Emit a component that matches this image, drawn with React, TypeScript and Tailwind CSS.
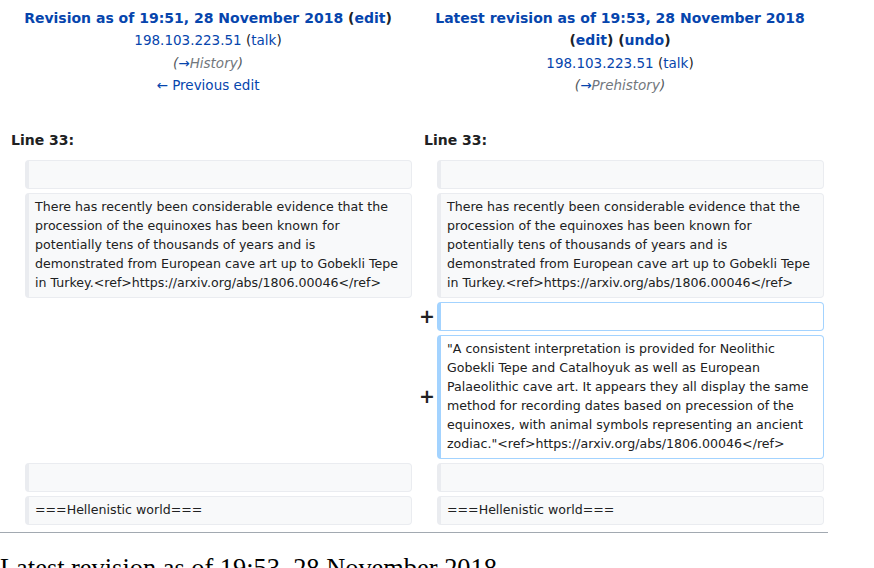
import React from "react";

const sans = { fontFamily: '"DejaVu Sans", sans-serif' };

function Box({ added, children }: { added?: boolean; children?: React.ReactNode }) {
  return (
    <div
      className={
        "rounded-[4px] border border-l-4 border-solid pt-[3px] pb-[5px] pl-[6px] pr-[6px] text-[12.6px] leading-[19px] text-[#202122] " +
        (added ? "border-[#a3d3ff] bg-white" : "border-[#eaecf0] bg-[#f8f9fa]")
      }
    >
      {children ? children : <span>&nbsp;</span>}
    </div>
  );
}

function Marker({ plus }: { plus?: boolean }) {
  return (
    <div className="-mr-[2px] flex items-center justify-end text-[19px] font-bold text-[#202122]">
      {plus ? "+" : ""}
    </div>
  );
}

const text1 = (
  <>
    There has recently been considerable evidence that the procession of the equinoxes has been known for
    potentially tens of thousands of years and is demonstrated from European cave art up to Gobekli Tepe in
    Turkey.&lt;ref&gt;https://arxiv.org/abs/1806.00046&lt;/ref&gt;
  </>
);

export default function App() {
  return (
    <div className="h-[568px] w-[874px] overflow-hidden bg-white" style={sans}>
      <div className="w-[828px] px-[4px]">
        {/* header */}
        <div className="grid grid-cols-2 gap-[4px] pt-[7px] text-[13.5px] leading-[22.4px] text-[#202122]">
          <div className="flex flex-col items-center text-center">
            <div className="text-[14px] font-bold">
              <span className="text-[#0645ad]">Revision as of 19:51, 28 November 2018</span> (
              <span className="text-[#0645ad]">edit</span>)
            </div>
            <div>
              <span className="text-[#0645ad]">198.103.223.51</span> (<span className="text-[#0645ad]">talk</span>)
            </div>
            <div className="italic text-[#54595d]">
              (<span className="text-[#0645ad]">→</span>
              <span className="text-[#72777d]">History</span>)
            </div>
            <div className="text-[#0645ad]">← Previous edit</div>
          </div>
          <div className="flex flex-col items-center text-center">
            <div className="text-[14px] font-bold text-[#0645ad]">Latest revision as of 19:53, 28 November 2018</div>
            <div className="text-[14px] font-bold">
              (<span className="text-[#0645ad]">edit</span>) (<span className="text-[#0645ad]">undo</span>)
            </div>
            <div>
              <span className="text-[#0645ad]">198.103.223.51</span> (<span className="text-[#0645ad]">talk</span>)
            </div>
            <div className="italic text-[#54595d]">
              (<span className="text-[#0645ad]">→</span>
              <span className="text-[#72777d]">Prehistory</span>)
            </div>
          </div>
        </div>

        {/* line numbers */}
        <div className="mt-[32px] grid grid-cols-2 gap-[4px] text-[14px] font-bold leading-[22px] text-[#202122]">
          <div className="pl-[7px]">Line 33:</div>
          <div className="pl-[8px]">Line 33:</div>
        </div>

        {/* diff rows */}
        <div className="mt-[9px] grid grid-cols-[17px_1fr_17px_1fr] gap-[4px]">
          <Marker />
          <Box />
          <Marker />
          <Box />

          <Marker />
          <Box>{text1}</Box>
          <Marker />
          <Box>{text1}</Box>

          <div />
          <div />
          <Marker plus />
          <Box added />

          <div />
          <div />
          <Marker plus />
          <Box added>
            "A consistent interpretation is provided for Neolithic Gobekli Tepe and Catalhoyuk as well as European
            Palaeolithic cave art. It appears they all display the same method for recording dates based on
            precession of the equinoxes, with animal symbols representing an ancient
            zodiac."&lt;ref&gt;https://arxiv.org/abs/1806.00046&lt;/ref&gt;
          </Box>

          <Marker />
          <Box />
          <Marker />
          <Box />

          <Marker />
          <Box>===Hellenistic world===</Box>
          <Marker />
          <Box>===Hellenistic world===</Box>
        </div>
      </div>

      <div className="mt-[7px] h-px w-[828px] bg-[#a2a9b1]" />

      <div
        className="mt-[22px] whitespace-nowrap text-[26.4px] leading-[26.4px] text-black"
        style={{ fontFamily: '"Liberation Serif", serif' }}
      >
        Latest revision as of 19:53, 28 November 2018
      </div>
    </div>
  );
}
